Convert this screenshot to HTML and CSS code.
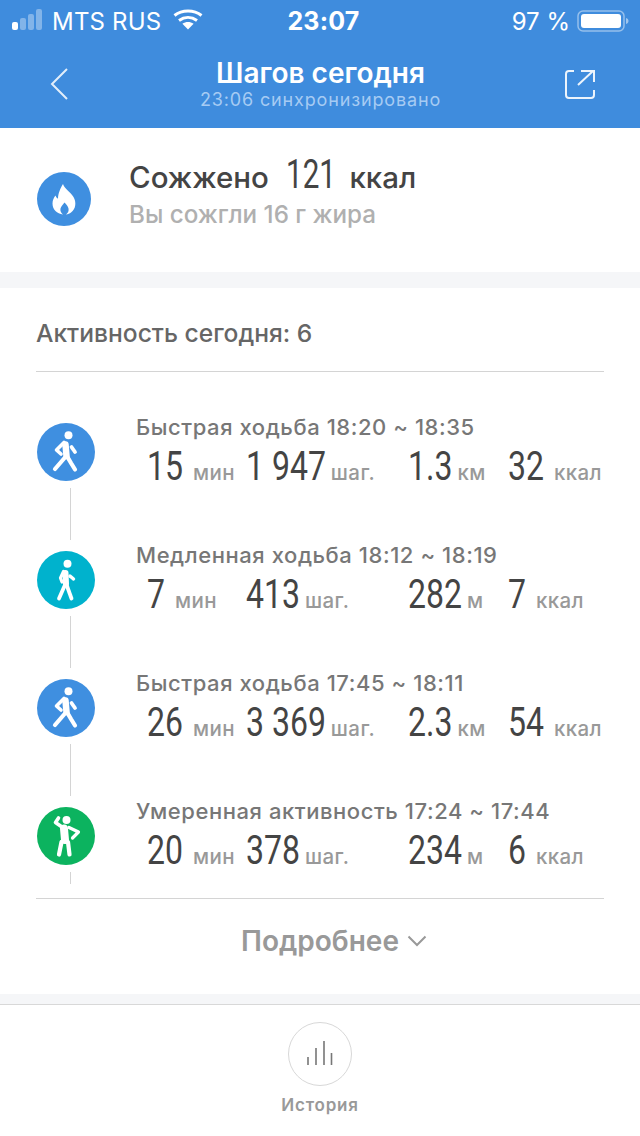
FILE: index.html
```html
<!DOCTYPE html>
<html lang="ru">
<head>
<meta charset="utf-8">
<title>Шагов сегодня</title>
<link rel="stylesheet" href="styles.css">
</head>
<body>
<svg class="defs" width="0" height="0" aria-hidden="true">
  <defs>
    <symbol id="walk-fast" viewBox="0 0 58 58">
      <circle cx="31.500" cy="12.300" r="4" fill="#fff"/>
      <g fill="none" stroke="#fff" stroke-linecap="round" stroke-linejoin="round">
        <path d="M28.500 21.500L29.500 33" stroke-width="6.500"/>
        <path d="M27 19.500L19.500 27 24 31" stroke-width="3.600"/>
        <path d="M34.500 24L38 29" stroke-width="3.800"/>
        <path d="M27.500 35L18 46" stroke-width="4.200"/>
        <path d="M30.500 34L34 40 38 46.500" stroke-width="4.200"/>
      </g>
    </symbol>
    <symbol id="walk-slow" viewBox="0 0 58 58">
      <circle cx="30.500" cy="12.700" r="4" fill="#fff"/>
      <g fill="none" stroke="#fff" stroke-linecap="round" stroke-linejoin="round">
        <path d="M28.500 22L29 33" stroke-width="6"/>
        <path d="M26.500 20.500L23.500 27 25 31" stroke-width="3.200"/>
        <path d="M33 25L36.500 28" stroke-width="3.400"/>
        <path d="M27.500 35L22 47.500" stroke-width="3.800"/>
        <path d="M30 35L34.500 47.500" stroke-width="3.800"/>
      </g>
    </symbol>
    <symbol id="stretch" viewBox="0 0 58 58">
      <circle cx="29.500" cy="13" r="4" fill="#fff"/>
      <g fill="none" stroke="#fff" stroke-linecap="round" stroke-linejoin="round">
        <path d="M27 21.500L28 33" stroke-width="8"/>
        <path d="M25 20L18.500 15.500 21.500 11" stroke-width="3.600"/>
        <path d="M32 20.500L41.500 25 35.500 31" stroke-width="3.200"/>
        <path d="M24.500 35L22 47.500" stroke-width="4.200"/>
        <path d="M31 35L32.500 47.500" stroke-width="4.200"/>
      </g>
    </symbol>
  </defs>
</svg>
<main class="phone">
  <header class="top">
    <div class="status">
      <div class="status-left">
        <svg class="signal" width="30" height="22" viewBox="0 0 30 22" aria-hidden="true">
          <rect x="0" y="13" width="6" height="8" rx="2" fill="#fff"/>
          <rect x="8" y="9" width="6" height="12" rx="2" fill="#fff" opacity=".35"/>
          <rect x="16" y="5" width="6" height="16" rx="2" fill="#fff" opacity=".35"/>
          <rect x="24" y="0" width="6" height="21" rx="2" fill="#fff" opacity=".35"/>
        </svg>
        <span>MTS RUS</span>
        <svg class="wifi" width="30" height="21" viewBox="0 0 30 21" aria-hidden="true">
          <path d="M1.500 6.500C9 .5 21 .5 28.500 6.500M6 11.500c5.500-4 12.500-4 18 0" fill="none" stroke="#fff" stroke-width="3"/>
          <path d="M15 20.500l-5.600-5.800c3.400-2.200 7.800-2.200 11.200 0z" fill="#fff"/>
        </svg>
      </div>
      <div class="clock">23:07</div>
      <div class="status-right">
        <span>97 %</span>
        <svg width="52" height="24" viewBox="0 0 52 24" aria-hidden="true">
          <rect x="1" y="2" width="46" height="20" rx="5" fill="none" stroke="#fff" stroke-opacity=".45" stroke-width="1.500"/>
          <rect x="4" y="5" width="40" height="14" rx="3" fill="#fff"/>
          <path d="M49 9c1.600.4 2.500 1.500 2.500 3s-.9 2.600-2.500 3z" fill="#fff" opacity=".5"/>
        </svg>
      </div>
    </div>
    <div class="nav">
      <svg class="nav-icon" width="20" height="34" viewBox="0 0 20 34" aria-hidden="true">
        <path d="M17 2L2 17l15 15" fill="none" stroke="#fff" stroke-opacity=".85" stroke-width="2"/>
      </svg>
      <div class="nav-title">
        <h1>Шагов сегодня</h1>
        <p>23:06 синхронизировано</p>
      </div>
      <svg class="nav-icon" width="30" height="30" viewBox="0 0 30 30" aria-hidden="true">
        <path d="M9 2H4a3 3 0 0 0-3 3v21a3 3 0 0 0 3 3h22a3 3 0 0 0 3-3v-5" fill="none" stroke="#fff" stroke-opacity=".9" stroke-width="2"/>
        <path d="M13 16L28 2M16 2h13v11" fill="none" stroke="#fff" stroke-opacity=".9" stroke-width="2"/>
      </svg>
    </div>
  </header>

  <section class="burn">
    <div class="flame">
      <svg width="26" height="32" viewBox="0 0 26 32" aria-hidden="true">
        <path fill-rule="evenodd" d="M12 1c1.500 5 7 7.500 10.500 13 3 5 2.500 12-2.500 15.500-1.300 1-3 1.700-5 2 2-1.500 3-3.500 2.500-6-.4-2.200-2-3.700-4-6-1.500 2-3.500 3.800-4 6-.5 2.400.5 4.500 2.500 6-6-.7-10.500-5-10.500-11 0-3.500 1.500-6 3-8 .5 1.500 1.200 2.500 2.500 3.200C7 10.500 9.500 5 12 1z" fill="#fff"/>
      </svg>
    </div>
    <div>
      <div class="burn-main">
        <span>Сожжено</span><b>121</b><span>ккал</span>
      </div>
      <div class="burn-sub">Вы сожгли 16 г жира</div>
    </div>
  </section>

  <section class="activity">
    <h2>Активность сегодня: 6</h2>
    <div class="rows">
      <article class="row">
        <div class="rail">
          <div class="badge blue"><svg width="58" height="58"><use href="#walk-fast"/></svg></div>
          <div class="line"></div>
        </div>
        <div class="info">
          <div class="label">Быстрая ходьба 18:20 ~ 18:35</div>
          <div class="stats">
            <div class="stat wide"><b class="d2">15</b><span>мин</span></div>
            <div class="stat"><b class="d4">1 947</b><span>шаг.</span></div>
            <div class="stat"><b class="dec">1.3</b><span>км</span></div>
            <div class="stat wide"><b class="d2">32</b><span>ккал</span></div>
          </div>
        </div>
      </article>
      <article class="row">
        <div class="rail">
          <div class="badge teal"><svg width="58" height="58"><use href="#walk-slow"/></svg></div>
          <div class="line"></div>
        </div>
        <div class="info">
          <div class="label">Медленная ходьба 18:12 ~ 18:19</div>
          <div class="stats">
            <div class="stat wide"><b class="d1">7</b><span>мин</span></div>
            <div class="stat"><b class="d3">413</b><span>шаг.</span></div>
            <div class="stat"><b class="d3">282</b><span>м</span></div>
            <div class="stat wide"><b class="d1">7</b><span>ккал</span></div>
          </div>
        </div>
      </article>
      <article class="row">
        <div class="rail">
          <div class="badge blue"><svg width="58" height="58"><use href="#walk-fast"/></svg></div>
          <div class="line"></div>
        </div>
        <div class="info">
          <div class="label">Быстрая ходьба 17:45 ~ 18:11</div>
          <div class="stats">
            <div class="stat wide"><b class="d2">26</b><span>мин</span></div>
            <div class="stat"><b class="d4">3 369</b><span>шаг.</span></div>
            <div class="stat"><b class="dec">2.3</b><span>км</span></div>
            <div class="stat wide"><b class="d2">54</b><span>ккал</span></div>
          </div>
        </div>
      </article>
      <article class="row last">
        <div class="rail">
          <div class="badge green"><svg width="58" height="58"><use href="#stretch"/></svg></div>
          <div class="line"></div>
        </div>
        <div class="info">
          <div class="label">Умеренная активность 17:24 ~ 17:44</div>
          <div class="stats">
            <div class="stat wide"><b class="d2">20</b><span>мин</span></div>
            <div class="stat"><b class="d3">378</b><span>шаг.</span></div>
            <div class="stat"><b class="d3">234</b><span>м</span></div>
            <div class="stat wide"><b class="d1">6</b><span>ккал</span></div>
          </div>
        </div>
      </article>
    </div>
    <div class="more">
      <span>Подробнее</span>
      <svg width="20" height="12" viewBox="0 0 20 12" aria-hidden="true">
        <path d="M1.500 1.500L10 10l8.500-8.500" fill="none" stroke="#999" stroke-width="2"/>
      </svg>
    </div>
  </section>

  <footer class="bottom">
    <div class="history-btn">
      <svg width="28" height="26" viewBox="0 0 28 26" aria-hidden="true">
        <path d="M2 16v8M10 7v17M18 0v24M25.500 12v12" fill="none" stroke="#777" stroke-width="1.600"/>
      </svg>
    </div>
    <div class="history-label">История</div>
  </footer>
</main>
</body>
</html>
```
FILE: styles.css
```css
* { box-sizing: border-box; }
html, body { margin: 0; padding: 0; }
body {
  width: 640px;
  height: 1136px;
  overflow: hidden;
  background: #fff;
  font-family: Inter, Roboto, "Liberation Sans", sans-serif;
  color: #444;
}
.defs { position: absolute; }
.phone { display: flex; flex-direction: column; height: 1136px; }

.top { height: 128px; background: #3f8cdd; color: #fff; flex: none; }
.status {
  height: 42px;
  display: grid;
  grid-template-columns: 1fr auto 1fr;
  align-items: center;
  padding: 0 11px 0 12px;
  font-size: 24px;
}
.status-left { display: flex; align-items: center; gap: 11px; letter-spacing: .2px; }
.signal { margin-bottom: 2px; margin-right: -1px; }
.wifi { margin-left: 1px; margin-bottom: 3px; }
.clock { font-weight: 700; font-size: 25px; letter-spacing: .2px; padding-left: 6px; }
.status-right { display: flex; justify-content: flex-end; align-items: center; gap: 7px; }

.nav {
  height: 86px;
  padding: 0 45px 2px 50px;
  display: flex;
  align-items: center;
  justify-content: space-between;
}
.nav-title { text-align: center; margin-left: 6px; }
.nav-title h1 { margin: 0; font-size: 28px; line-height: 31px; font-weight: 600; }
.nav-title p { margin: 0; font-size: 18px; line-height: 22px; color: #a6cbf3; letter-spacing: .85px; }

.burn {
  height: 144px;
  flex: none;
  display: flex;
  align-items: center;
  gap: 38px;
  padding: 0 37px 12px;
}
.flame {
  width: 54px;
  height: 54px;
  border-radius: 50%;
  background: #3f8fe0;
  display: flex;
  align-items: center;
  justify-content: center;
  margin-top: 10px;
}
.burn-main {
  display: flex;
  align-items: baseline;
  gap: 17px;
  font-size: 29.500px;
  font-weight: 500;
  color: #444;
  line-height: 40px;
}
.burn-main b {
  font-family: Roboto, sans-serif;
  font-size: 40px;
  font-weight: 400;
  transform: scaleX(.74);
  transform-origin: left;
  margin-right: -21px;
}
.burn-sub { font-size: 24.200px; line-height: 36px; color: #b0b0b0; font-weight: 500; }

.activity {
  flex: none;
  height: 706px;
  border-top: 16px solid #f5f6f8;
  border-bottom: 10px solid #f5f6f8;
  box-sizing: content-box;
  padding: 0 36px;
}
.activity h2 {
  margin: 0;
  height: 84px;
  border-bottom: 1px solid #d4d4d4;
  font-size: 24.600px;
  font-weight: 500;
  color: #666;
  line-height: 90px;
}
.rows {
  padding-top: 40px;
  border-bottom: 1px solid #d4d4d4;
  height: 527px;
}
.row { display: flex; height: 128px; gap: 40px; }
.row.last { height: 120px; }
.rail {
  width: 60px;
  flex: none;
  display: flex;
  flex-direction: column;
  align-items: center;
  padding-top: 11px;
}
.badge { width: 58px; height: 58px; border-radius: 50%; flex: none; }
.badge svg { display: block; }
.blue { background: #3f8fe0; }
.teal { background: #00b2cd; }
.green { background: #0cb35f; }
.line { width: 1px; height: 56px; margin-top: 7px; background: #d4d4d4; margin-left: 9px; }
.row.last .line { height: 12px; }

.info { flex: 1; }
.label { font-size: 22px; line-height: 28px; color: #777; font-weight: 500; letter-spacing: .56px; margin-top: 1px; }
.stats {
  display: grid;
  grid-template-columns: 99px 162px 100px 1fr;
  padding-left: 11px;
  margin-top: 2px;
}
.stat { display: flex; align-items: baseline; gap: 5px; white-space: nowrap; line-height: 48px; }
.stat.wide { gap: 10px; }
.stat b {
  font-family: Roboto, sans-serif;
  font-size: 40px;
  font-weight: 400;
  color: #444;
  transform: scaleX(.8);
  transform-origin: left;
}
.stat b.d1 { margin-right: -4.500px; }
.stat b.d2 { margin-right: -9px; }
.stat b.d3 { margin-right: -13.500px; }
.stat b.d4 { margin-right: -20px; }
.stat b.dec { margin-right: -11px; }
.stat span { font-size: 20.500px; color: #999; font-weight: 500; letter-spacing: .4px; }

.more {
  height: 95px;
  padding: 0 0 11px 28px;
  display: flex;
  align-items: center;
  justify-content: center;
  gap: 8px;
  font-size: 28px;
  font-weight: 600;
  color: #999;
}
.more span { padding-bottom: 1px; }

.bottom {
  border-top: 1px solid #d8d8d8;
  flex: 1;
  display: flex;
  flex-direction: column;
  align-items: center;
  padding-top: 17px;
}
.history-btn {
  width: 64px;
  height: 64px;
  border-radius: 50%;
  border: 1px solid #d8d8d8;
  display: flex;
  align-items: center;
  justify-content: center;
}
.history-label { font-size: 17px; line-height: 24px; margin-top: 7px; color: #999; font-weight: 600; letter-spacing: .8px; }
```
